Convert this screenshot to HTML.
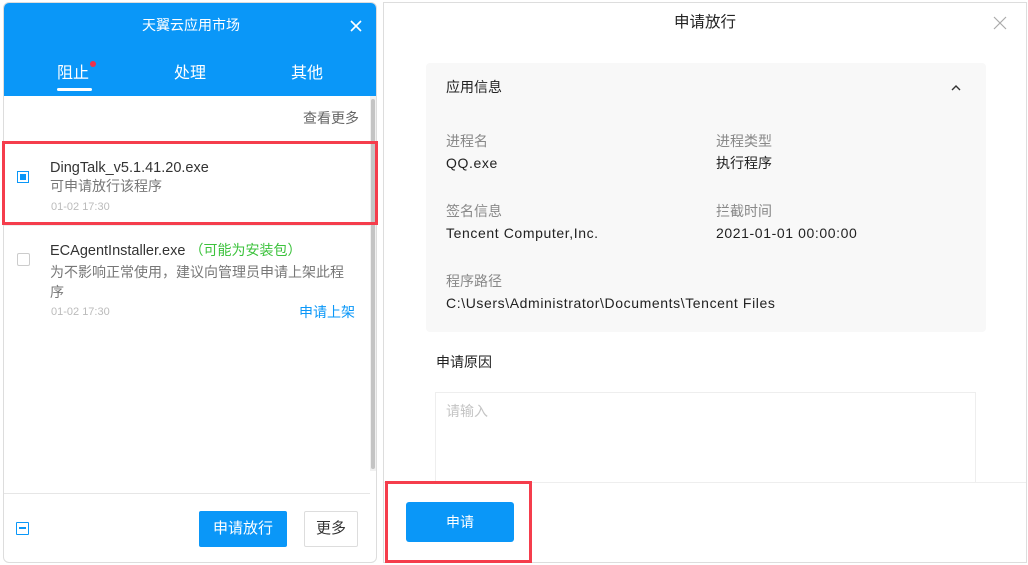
<!DOCTYPE html><html><head><meta charset="utf-8"><style>
*{box-sizing:border-box;margin:0;padding:0}
body{width:1028px;height:565px;background:#fff;font-family:"Liberation Sans","Noto Sans CJK SC",sans-serif;position:relative;overflow:hidden}
.a{position:absolute;line-height:1.2;white-space:nowrap}
.l{letter-spacing:0.6px}
</style></head><body>
<!-- left panel -->
<div class="a" style="left:3px;top:2px;width:374px;height:561px;border:1px solid #ddd;border-radius:6px;overflow:hidden;background:#fff">
 <div class="a" style="left:0;top:0;width:374px;height:93px;background:#0a97f8"></div>
 <div class="a" style="left:0;top:14px;width:374px;text-align:center;color:#fff;font-size:14px">天翼云应用市场</div>
 <svg class="a" style="left:346px;top:17px" width="12" height="12" viewBox="0 0 12 12"><path d="M1 1L11 11M11 1L1 11" stroke="#fff" stroke-width="1.6"/></svg>
 <div class="a" style="left:53px;top:61px;color:#fff;font-size:16px">阻止</div>
 <div class="a" style="left:86px;top:58px;width:6px;height:6px;border-radius:3px;background:#f0304a"></div>
 <div class="a" style="left:53px;top:85px;width:35px;height:3px;border-radius:2px;background:#fff"></div>
 <div class="a" style="left:170px;top:61px;color:#fff;font-size:16px">处理</div>
 <div class="a" style="left:287px;top:61px;color:#fff;font-size:16px">其他</div>
 <div class="a" style="left:366px;top:93px;width:8px;height:375px;background:#f0f0f0"></div>
 <div class="a" style="left:367px;top:96px;width:4px;height:370px;background:#c4c4c4;border-radius:2px"></div>
 <div class="a" style="left:299px;top:107px;color:#666;font-size:14px">查看更多</div>
 <div class="a" style="left:13px;top:168px;width:12px;height:12px;border:1px solid #0a97f8;background:#fff"><div style="margin:2px;width:6px;height:6px;background:#0a97f8"></div></div>
 <div class="a" style="left:46px;top:157px;color:#333;font-size:14.5px">DingTalk_v5.1.41.20.exe</div>
 <div class="a" style="left:46px;top:175px;color:#777;font-size:14px">可申请放行该程序</div>
 <div class="a" style="left:47px;top:198px;color:#bbb;font-size:11px">01-02 17:30</div>
 <div class="a" style="left:0;top:222px;width:366px;height:1px;background:#eee"></div>
 <div class="a" style="left:13px;top:250px;width:13px;height:13px;border:1px solid #ccc;border-radius:2px"></div>
 <div class="a" style="left:46px;top:239px;color:#333;font-size:14.5px">ECAgentInstaller.exe <span style="color:#3cc23c;font-size:14px">（可能为安装包）</span></div>
 <div class="a" style="left:46px;top:259px;width:300px;color:#777;font-size:14px;line-height:20px;white-space:normal">为不影响正常使用，建议向管理员申请上架此程序</div>
 <div class="a" style="left:47px;top:303px;color:#bbb;font-size:11px">01-02 17:30</div>
 <div class="a" style="left:295px;top:301px;color:#0a97f8;font-size:14px">申请上架</div>
 <div class="a" style="left:0;top:490px;width:366px;height:1px;background:#e6e6e6"></div>
 <div class="a" style="left:12px;top:519px;width:13px;height:13px;border:1.5px solid #0a97f8;border-radius:1px"><div style="margin:4px 2px;height:2px;background:#0a97f8"></div></div>
 <div class="a" style="left:195px;top:508px;width:88px;height:36px;background:#0a97f8;border-radius:2px;color:#fff;font-size:15px;text-align:center;line-height:36px">申请放行</div>
 <div class="a" style="left:300px;top:508px;width:54px;height:36px;border:1px solid #ddd;border-radius:2px;color:#333;font-size:15px;text-align:center;line-height:34px">更多</div>
</div>
<div class="a" style="left:2px;top:141px;width:376px;height:84px;border:3px solid #f53d4c"></div>
<!-- right panel -->
<div class="a" style="left:383px;top:2px;width:644px;height:561px;border:1px solid #ddd;background:#fff">
 <div class="a" style="left:0;top:11px;width:642px;text-align:center;color:#222;font-size:15.5px">申请放行</div>
 <svg class="a" style="left:609px;top:13px" width="14" height="14" viewBox="0 0 14 14"><path d="M1 1L13 13M13 1L1 13" stroke="#aaa" stroke-width="1.2"/></svg>
 <div class="a" style="left:42px;top:60px;width:560px;height:269px;background:#f8f8f8;border-radius:4px"></div>
 <div class="a" style="left:62px;top:76px;color:#222;font-size:14px">应用信息</div>
 <svg class="a" style="left:567px;top:81px" width="10" height="7" viewBox="0 0 10 7"><path d="M1 6L5 2L9 6" fill="none" stroke="#333" stroke-width="1.4"/></svg>
 <div class="a" style="left:62px;top:130px;color:#888;font-size:14px">进程名</div>
 <div class="a l" style="left:62px;top:152px;color:#222;font-size:14px">QQ.exe</div>
 <div class="a" style="left:332px;top:130px;color:#888;font-size:14px">进程类型</div>
 <div class="a" style="left:332px;top:152px;color:#222;font-size:14px">执行程序</div>
 <div class="a" style="left:62px;top:200px;color:#888;font-size:14px">签名信息</div>
 <div class="a l" style="left:62px;top:222px;color:#222;font-size:14px">Tencent Computer,Inc.</div>
 <div class="a" style="left:332px;top:200px;color:#888;font-size:14px">拦截时间</div>
 <div class="a l" style="left:332px;top:222px;color:#222;font-size:14px">2021-01-01 00:00:00</div>
 <div class="a" style="left:62px;top:270px;color:#888;font-size:14px">程序路径</div>
 <div class="a l" style="left:62px;top:292px;color:#222;font-size:14px">C:\Users\Administrator\Documents\Tencent Files</div>
 <div class="a" style="left:52px;top:351px;color:#222;font-size:14px">申请原因</div>
 <div class="a" style="left:51px;top:389px;width:541px;height:95px;border:1px solid #eee;border-bottom:none"></div>
 <div class="a" style="left:62px;top:400px;color:#c4c4c4;font-size:14px">请输入</div>
 <div class="a" style="left:0;top:479px;width:642px;height:80px;background:#fff;border-top:1px solid #eee"></div>
 <div class="a" style="left:22px;top:499px;width:108px;height:40px;background:#0a97f8;border-radius:3px;color:#fff;font-size:14px;text-align:center;line-height:40px">申请</div>
</div>
<div class="a" style="left:385px;top:481px;width:147px;height:82px;border:3px solid #f53d4c"></div>
</body></html>
